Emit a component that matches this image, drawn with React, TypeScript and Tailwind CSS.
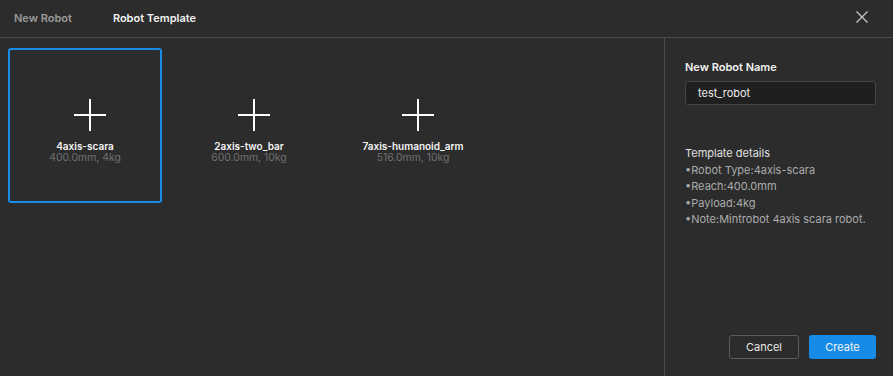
import React from "react";

const templates = [
  { name: "4axis-scara", sub: "400.0mm, 4kg", selected: true },
  { name: "2axis-two_bar", sub: "600.0mm, 10kg", selected: false },
  { name: "7axis-humanoid_arm", sub: "516.0mm, 10kg", selected: false },
];

function Plus() {
  return (
    <svg width="32" height="32" viewBox="0 0 32 32" className="ml-[10px]">
      <path d="M16 0V32M0 16H32" stroke="#ffffff" strokeWidth="2" />
    </svg>
  );
}

export default function App() {
  return (
    <div
      className="w-[893px] h-[376px] bg-[#2c2c2c] flex flex-col overflow-hidden text-[11px]"
      style={{ fontFamily: "Inter, 'Noto Sans', sans-serif" }}
    >
      <div className="h-[38px] flex items-center border-b border-[#4a4a4a] shrink-0 relative">
        <div className="pl-[14px] text-[#9a9a9a] font-semibold">New Robot</div>
        <div className="pl-[41px] text-[#f2f2f2] font-semibold">Robot Template</div>
        <svg
          width="12"
          height="12"
          viewBox="0 0 12 12"
          className="absolute right-[25px] top-[11px]"
        >
          <path d="M0.5 0.5L11.5 11.5M11.5 0.5L0.5 11.5" stroke="#c8c8c8" strokeWidth="1.3" />
        </svg>
      </div>
      <div className="flex flex-1 min-h-0">
        <div className="flex-1 pl-[8px] pt-[10px] flex gap-[10px] items-start">
          {templates.map((t) => (
            <div
              key={t.name}
              className={
                "w-[154px] h-[155px] rounded-[3px] flex flex-col items-center pt-[49px] border-2 " +
                (t.selected ? "border-[#168ce6]" : "border-transparent")
              }
            >
              <Plus />
              <div className="mt-[9px] text-[10px] text-[#f4f4f4] font-semibold leading-[12px]">{t.name}</div>
              <div className="text-[10.4px] text-[#707070] leading-[12px]">{t.sub}</div>
            </div>
          ))}
        </div>
        <div className="w-[229px] border-l border-[#4a4a4a] flex flex-col pl-[20px] pr-[17px] pt-[21px] pb-[17px]">
          <div className="text-[#f2f2f2] font-semibold leading-[16px]">New Robot Name</div>
          <div className="mt-[6px] h-[24px] rounded-[3px] border border-[#454545] bg-[#1f1f1f] flex items-center pl-[12px] text-[#ececec]">
            test_robot
          </div>
          <div className="mt-[40px] text-[#e0e0e0] leading-[16.5px]">Template details</div>
          <div className="text-[#ababab] leading-[16.5px]">•Robot Type:4axis-scara</div>
          <div className="text-[#ababab] leading-[16.5px]">•Reach:400.0mm</div>
          <div className="text-[#ababab] leading-[16.5px]">•Payload:4kg</div>
          <div className="text-[#ababab] leading-[16.5px]">•Note:Mintrobot 4axis scara robot.</div>
          <div className="mt-auto flex justify-end gap-[10px]">
            <button className="w-[70px] h-[24px] rounded-[3px] border border-[#5a5a5a] text-[#e6e6e6] text-[11px]">
              Cancel
            </button>
            <button className="w-[67px] h-[24px] rounded-[3px] bg-[#168ce6] text-[#f4f4f4] text-[11px]">
              Create
            </button>
          </div>
        </div>
      </div>
    </div>
  );
}
